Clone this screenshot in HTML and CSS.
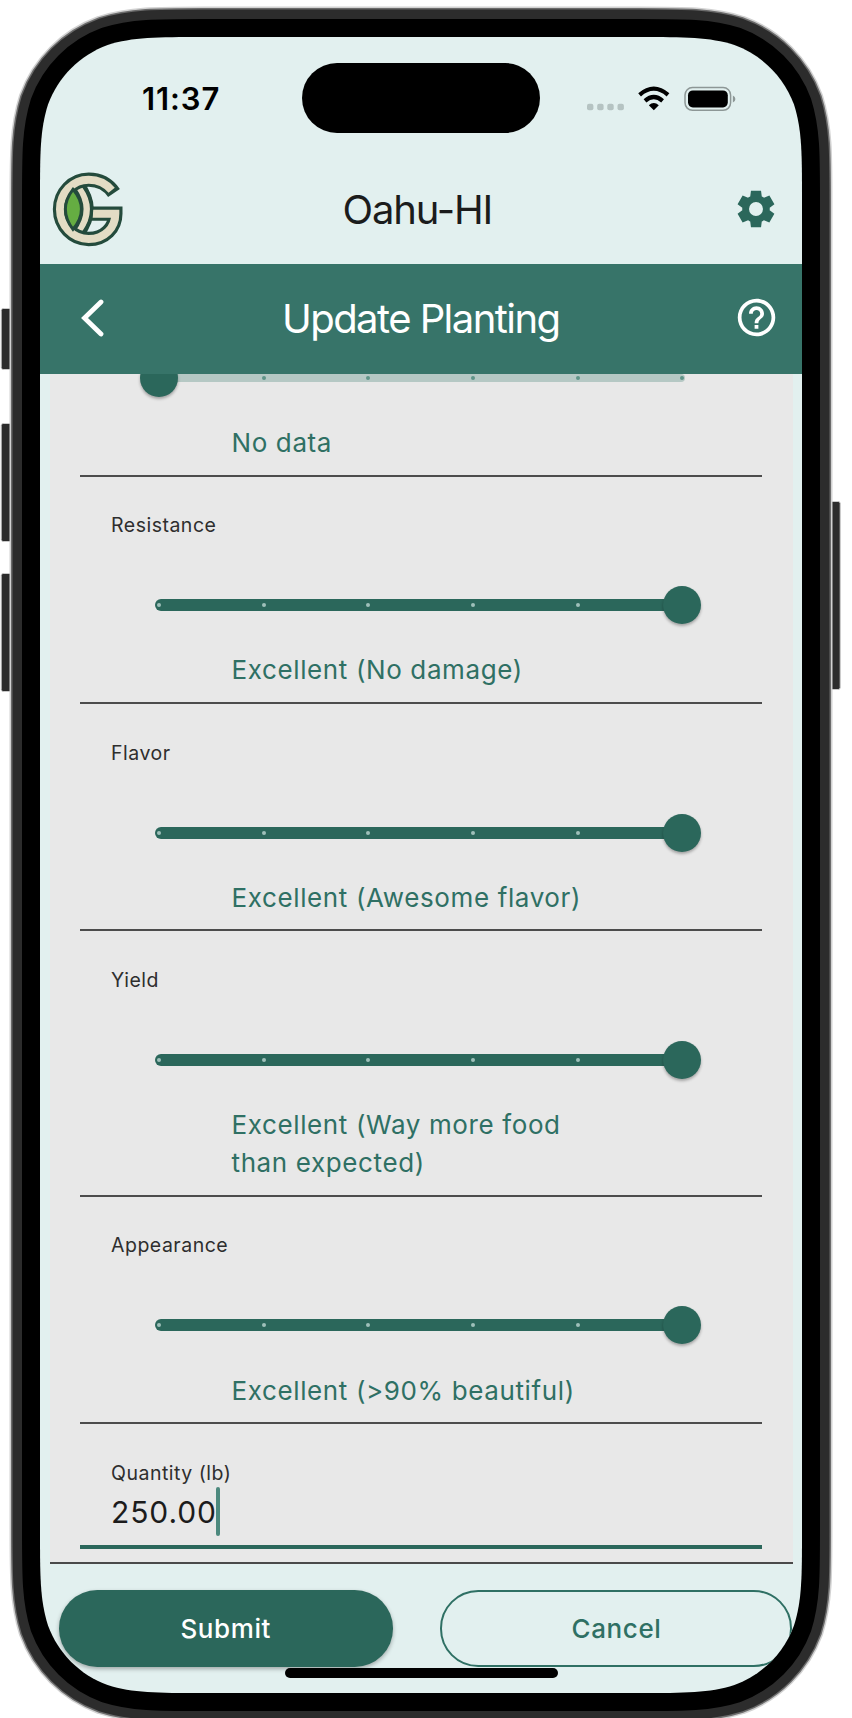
FILE: index.html
```html
<!DOCTYPE html>
<html lang="en">
<head>
<meta charset="utf-8">
<title>Update Planting</title>
<link rel="stylesheet" href="styles.css">
</head>
<body>
<div class="phone">
  <svg class="bezel" width="852" height="1718" viewBox="0 0 852 1718" aria-hidden="true">
    <g fill="#2b2b2b" stroke="#c9c9c9" stroke-width="1">
      <rect x="1.2" y="308.5" width="16" height="61" rx="2"/>
      <rect x="1.2" y="423.5" width="16" height="118" rx="2"/>
      <rect x="1.2" y="573.5" width="16" height="118" rx="2"/>
      <rect x="824" y="501.5" width="16.2" height="188" rx="2"/>
    </g>
    <defs>
      <path id="outline" d="M203.6 37H638.4C685.5 37 709.1 37 734.4 45C762.1 55.1 783.9 76.9 794 104.6C802 129.9 802 153.5 802 200.6V1529.4C802 1576.5 802 1600.1 794 1625.4C783.9 1653.1 762.1 1674.9 734.4 1685C709.1 1693 685.5 1693 638.4 1693H203.6C156.5 1693 132.9 1693 107.6 1685C79.9 1674.9 58.1 1653.1 48 1625.4C40 1600.1 40 1576.5 40 1529.4V200.6C40 153.5 40 129.9 48 104.6C58.1 76.9 79.9 55.1 107.6 45C132.9 37 156.5 37 203.6 37Z"/>
    </defs>
    <use href="#outline" fill="#000" stroke="#d2d2d2" stroke-width="61"/>
    <use href="#outline" stroke="#6b6b6b" stroke-width="58"/>
    <use href="#outline" stroke="#2c2c2c" stroke-width="55"/>
    <use href="#outline" stroke="#000" stroke-width="36"/>
  </svg>

  <main class="screen">
    <div class="statusbar">
      <span class="time">11:37</span>
      <span class="island"></span>
      <svg class="status-icons" width="150" height="30" viewBox="0 0 150 30">
        <g fill="#b5c3c2">
          <rect x="0" y="18.8" width="6.4" height="6.4" rx="2"/><rect x="10.2" y="18.8" width="6.4" height="6.4" rx="2"/><rect x="20.3" y="18.8" width="6.4" height="6.4" rx="2"/><rect x="30.5" y="18.8" width="6.4" height="6.4" rx="2"/>
        </g>
        <g fill="none" stroke="#000" stroke-width="4.2">
          <path d="M52.6 9.8Q66.8 -2.5 81 9.8"/>
          <path d="M58 15.9Q66.8 8.2 75.6 15.9"/>
        </g>
        <path d="M61.8 20.3Q66.8 15.8 71.8 20.3L66.8 25.3Z"/>
        <rect x="98" y="2.5" width="45.6" height="22.8" rx="7.5" fill="none" stroke="#8d9796" stroke-width="1.5"/>
        <rect x="101" y="5.4" width="39.8" height="17" rx="4.8"/>
        <path d="M145.9 10.5Q148.4 11.5 148.4 14T145.9 17.5Z" fill="#8d9796"/>
      </svg>
    </div>

    <header class="brandbar">
      <svg class="logo" width="100" height="100" viewBox="0 0 300 300">
        <path d="M114 76Q168 148 114 220" fill="none" stroke="#244b3c" stroke-width="40"/>
        <path d="M114 76Q168 148 114 220" fill="none" stroke="#e3dcc4" stroke-width="20"/>
        <path d="M222 99C204 73 176 59 146 59C98 59 60 99 60 148C60 197 98 237 146 237C194 237 226 203 226 161H156" fill="none" stroke="#244b3c" stroke-width="43"/>
        <path d="M215 91C198 70 174 59 146 59C98 59 60 99 60 148C60 197 98 237 146 237C194 237 226 203 226 161H158" fill="none" stroke="#e3dcc4" stroke-width="24"/>
        <path d="M99 88Q53 148 99 208Q150 148 99 88Z" fill="#65ad42" stroke="#244b3c" stroke-width="9"/>
        <path d="M130 78Q180 148 130 218" fill="none" stroke="#244b3c" stroke-width="10"/>
      </svg>
      <h1 class="title place">Oahu-HI</h1>
      <svg class="icon" width="44" height="44" viewBox="0 0 24 24" fill="#2b675b"><path d="m9.25 22-.4-3.2q-.325-.125-.612-.3-.288-.175-.563-.375L4.7 19.375l-2.75-4.75 2.575-1.95Q4.5 12.5 4.5 12.337v-.675q0-.162.025-.337L1.95 9.375l2.75-4.75 2.975 1.25q.275-.2.575-.375.3-.175.6-.3l.4-3.2h5.5l.4 3.2q.325.125.613.3.287.175.562.375l2.975-1.25 2.75 4.75-2.575 1.95q.025.175.025.337v.675q0 .163-.05.338l2.575 1.95-2.75 4.75-2.95-1.25q-.275.2-.575.375-.3.175-.6.3l-.4 3.2Zm2.750-6.200a3.800 3.800 0 1 0 0-7.600 3.800 3.800 0 0 0 0 7.600Z" fill-rule="evenodd"/></svg>
    </header>

    <nav class="navbar">
      <svg class="back" width="24" height="40" viewBox="0 0 24 40"><path d="M20 3L3.500 19L20 35" fill="none" stroke="#fff" stroke-width="4.8" stroke-linecap="round"/></svg>
      <h2 class="title page">Update Planting</h2>
      <svg class="icon" width="45" height="45" viewBox="0 0 24 24" fill="#fff"><path d="M11 18h2v-2h-2v2zm1-16C6.48 2 2 6.48 2 12s4.48 10 10 10 10-4.48 10-10S17.52 2 12 2zm0 18c-4.41 0-8-3.590-8-8s3.590-8 8-8 8 3.590 8 8-3.590 8-8 8zm0-14c-2.210 0-4 1.790-4 4h2c0-1.100.9-2 2-2s2 .9 2 2c0 2-3 1.750-3 5h2c0-2.250 3-2.500 3-5 0-2.210-1.790-4-4-4z"/></svg>
    </nav>

    <form class="panel">
      <section class="rating cropped">
        <div class="slider empty"><i></i><i></i><i></i><i></i><i></i><i></i><b class="thumb"></b></div>
        <p class="value">No data</p>
      </section>
      <section class="rating">
        <label class="label">Resistance</label>
        <div class="slider"><i></i><i></i><i></i><i></i><i></i><i></i><b class="thumb"></b></div>
        <p class="value">Excellent (No damage)</p>
      </section>
      <section class="rating">
        <label class="label">Flavor</label>
        <div class="slider"><i></i><i></i><i></i><i></i><i></i><i></i><b class="thumb"></b></div>
        <p class="value">Excellent (Awesome flavor)</p>
      </section>
      <section class="rating">
        <label class="label">Yield</label>
        <div class="slider"><i></i><i></i><i></i><i></i><i></i><i></i><b class="thumb"></b></div>
        <p class="value">Excellent (Way more food<br>than expected)</p>
      </section>
      <section class="rating">
        <label class="label">Appearance</label>
        <div class="slider"><i></i><i></i><i></i><i></i><i></i><i></i><b class="thumb"></b></div>
        <p class="value">Excellent (&gt;90% beautiful)</p>
      </section>
      <section class="quantity">
        <label class="label">Quantity (lb)</label>
        <div class="entry"><span class="amount">250.00</span><span class="caret"></span></div>
      </section>
    </form>

    <footer class="actions">
      <button class="btn submit" type="button">Submit</button>
      <button class="btn cancel" type="button">Cancel</button>
    </footer>
    <div class="home"></div>
  </main>
</div>
</body>
</html>
```
FILE: styles.css
```css
* { box-sizing: border-box; }
body {
  margin: 0;
  background: #fff;
  font-family: Inter, "Liberation Sans", sans-serif;
}
h1, h2, p { margin: 0; font-weight: 400; }

.phone {
  position: relative;
  width: 852px;
  height: 1718px;
  overflow: hidden;
}
.bezel { position: absolute; inset: 0; fill: none; }
.screen {
  position: relative;
  display: flex;
  flex-direction: column;
  width: 852px;
  height: 1718px;
  padding: 37px 50px 25px 40px;
  background: #e2f0ef;
  clip-path: path("M203.6 37H638.4C685.5 37 709.1 37 734.4 45C762.1 55.1 783.9 76.9 794 104.6C802 129.9 802 153.5 802 200.6V1529.4C802 1576.5 802 1600.1 794 1625.4C783.9 1653.1 762.1 1674.9 734.4 1685C709.1 1693 685.5 1693 638.4 1693H203.6C156.5 1693 132.9 1693 107.6 1685C79.9 1674.9 58.1 1653.1 48 1625.4C40 1600.1 40 1576.5 40 1529.4V200.6C40 153.5 40 129.9 48 104.6C58.1 76.9 79.9 55.1 107.6 45C132.9 37 156.5 37 203.6 37Z");
}

.statusbar {
  display: flex;
  align-items: center;
  height: 122px;
  padding-left: 102px;
}
.time {
  width: 160px;
  margin-top: 1px;
  font-size: 31px;
  font-weight: 600;
  letter-spacing: 0.900px;
  color: #000;
}
.island {
  width: 238px;
  height: 70px;
  border-radius: 36px;
  background: #000;
}
.status-icons { margin: 4px 0 0 46.500px; }

.brandbar {
  display: flex;
  align-items: center;
  height: 105.300px;
}
.logo { margin-top: -4px; }
.title {
  font-size: 40px;
  line-height: 48px;
  white-space: nowrap;
}
.brandbar .icon { position: relative; top: -2.500px; }
.place {
  width: 391.500px;
  margin-left: 202.500px;
  margin-top: -4px;
  letter-spacing: -1.150px;
  color: #1b1c1c;
}

.navbar {
  display: flex;
  align-items: center;
  height: 109.700px;
  width: 762px;
  padding-left: 41px;
  background: #377469;
  color: #fff;
}
.navbar .icon { margin-top: -3px; }
.page {
  width: 451.500px;
  margin-left: 177px;
  letter-spacing: -1.550px;
}

.panel {
  width: 743px;
  height: 1190px;
  margin-left: 9.500px;
  padding: 0 30.500px;
  border-bottom: 2px solid #4a4a4a;
  background: #e8e8e8;
  overflow: hidden;
}
.rating {
  padding: 36.600px 0 12.600px 31px;
  border-bottom: 2px solid #4c4c4c;
}
.cropped { margin-top: -15px; padding-top: 0; }
.label {
  display: block;
  font-size: 19.500px;
  line-height: 24px;
  letter-spacing: 0.500px;
  color: #2e2e2e;
}
.slider {
  position: relative;
  display: flex;
  justify-content: space-between;
  align-items: center;
  width: 535px;
  height: 38px;
  margin: 49.100px 0 27.100px 43.300px;
  padding: 0 5px 0 2.800px;
}
.cropped .slider { margin-top: 0; }
.slider::before {
  content: "";
  position: absolute;
  left: 0.700px;
  right: 6px;
  top: 13px;
  height: 12px;
  border-radius: 6px;
  background: #2b675b;
}
.slider.empty::before { top: 15px; height: 8px; background: #b5c8c4; border-radius: 4px; right: 4px; }
.slider i {
  position: relative;
  width: 4px;
  height: 4px;
  border-radius: 50%;
  background: #9fc0ba;
}
.slider.empty i { background: #5f9488; }
.thumb {
  position: absolute;
  right: -12px;
  top: 0;
  width: 38px;
  height: 38px;
  border-radius: 50%;
  background: #2b675b;
  box-shadow: 0 2px 3px rgba(0, 0, 0, .3);
}
.empty .thumb { right: auto; left: -14.200px; }
.value {
  padding-left: 120.500px;
  font-size: 26px;
  line-height: 38px;
  letter-spacing: 0.620px;
  white-space: nowrap;
  color: #2f7064;
}

.quantity {
  padding: 36.600px 0 9px 31px;
  border-bottom: 4px solid #2b675b;
}
.entry {
  display: flex;
  margin-top: 2.300px;
}
.amount {
  width: 105px;
  font-size: 30px;
  line-height: 50px;
  height: 49px;
  letter-spacing: 0.900px;
  color: #1c1c1c;
}
.caret {
  width: 4px;
  height: 49px;
  border-radius: 2px;
  background: #4c897e;
}

.actions {
  display: flex;
  gap: 46.500px;
  margin: 26.500px 0 0 18.500px;
}
.btn {
  height: 76.500px;
  border: 0;
  border-radius: 38.250px;
  font-family: inherit;
  font-size: 26px;
  font-weight: 500;
  letter-spacing: 0.600px;
}
.submit {
  width: 334.500px;
  background: #2b675b;
  color: #fff;
  box-shadow: 0 2px 4px rgba(0, 0, 0, .3);
}
.cancel {
  width: 352px;
  padding-left: 8px;
  border: 2px solid #2f7064;
  background: transparent;
  color: #2f7064;
}
.home {
  width: 273px;
  height: 10px;
  margin: 1px 0 0 244.500px;
  border-radius: 5px;
  background: #000;
}
```
